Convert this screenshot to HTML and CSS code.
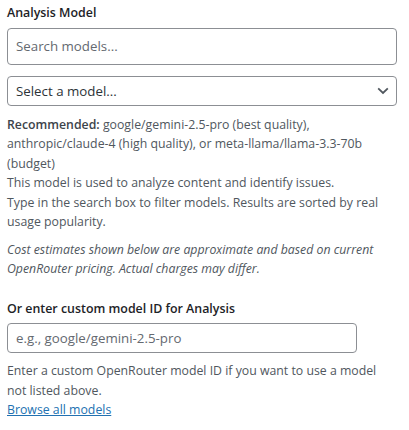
FILE: index.html
```html
<!DOCTYPE html>
<html lang="en">
<head>
<meta charset="utf-8">
<title>Analysis Model</title>
<link rel="stylesheet" href="styles.css">
</head>
<body>
<div class="panel">
  <label class="field-label" for="search">Analysis Model</label>
  <input class="search-input" id="search" type="text" placeholder="Search models...">
  <div class="select-wrap">
    <select class="model-select">
      <option>Select a model...</option>
    </select>
    <svg class="chevron" width="12" height="8" viewBox="0 0 12 8" aria-hidden="true"><path d="M1.2 1.4 L6 6 L10.8 1.4" fill="none" stroke="#50575e" stroke-width="1.8"/></svg>
  </div>
  <p class="description"><strong>Recommended:</strong> google/gemini-2.5-pro (best quality), anthropic/claude-4 (high quality), or meta-llama/llama-3.3-70b (budget)<br>This model is used to analyze content and identify issues.<br>Type in the search box to filter models. Results are sorted by real usage popularity.</p>
  <p class="description note">Cost estimates shown below are approximate and based on current OpenRouter pricing. Actual charges may differ.</p>

  <label class="field-label custom-label" for="custom">Or enter custom model ID for Analysis</label>
  <input class="custom-input" id="custom" type="text" placeholder="e.g., google/gemini-2.5-pro">
  <p class="description custom-desc">Enter a custom OpenRouter model ID if you want to use a model not listed above.<br><a href="#">Browse all models</a></p>
</div>
</body>
</html>
```

FILE: styles.css
```css
* { box-sizing: border-box; }
html, body { margin: 0; padding: 0; background: #fff; }
body {
  font-family: "Open Sans", "Noto Sans", "Liberation Sans", sans-serif;
  font-size: 12.3px;
  color: #3c434a;
}
.panel {
  width: 397px;
  padding: 3px 0 0 7px;
  display: flex;
  flex-direction: column;
  align-items: flex-start;
}
.field-label {
  display: block;
  font-weight: 600;
  font-size: 12.4px;
  line-height: 19.5px;
  color: #1d2327;
}
.search-input {
  margin-top: 5px;
  width: 390px;
  height: 37px;
  border: 1px solid #8c8f94;
  border-radius: 4px;
  padding: 0 8px;
  font-family: inherit;
  font-size: 13.3px;
  color: #2c3338;
  background: #fff;
}
.search-input::placeholder, .custom-input::placeholder { color: #646970; opacity: 1; }
.select-wrap {
  position: relative;
  margin-top: 11px;
  width: 390px;
}
.model-select {
  display: block;
  width: 390px;
  height: 30px;
  border: 1px solid #8c8f94;
  border-radius: 4px;
  padding: 0 24px 0 8px;
  font-family: inherit;
  font-size: 13.3px;
  color: #2c3338;
  background: #fff;
  appearance: none;
  -webkit-appearance: none;
}
.chevron {
  position: absolute;
  right: 8px;
  top: 11px;
}
.description {
  margin: 9px 0 0 0;
  width: 390px;
  line-height: 19.5px;
  color: #50575e;
}
.description strong { font-weight: 600; color: #3c434a; }
.note { font-style: italic; margin-top: 8px; color: #50575e; }
.custom-label { margin-top: 20px; }
.custom-input {
  margin-top: 5px;
  width: 350px;
  height: 30px;
  border: 1px solid #8c8f94;
  border-radius: 4px;
  padding: 0 8px;
  font-family: inherit;
  font-size: 13.3px;
  color: #2c3338;
  background: #fff;
}
.custom-desc { margin-top: 8px; }
.description a { color: #2271b1; text-decoration: underline; }
```
